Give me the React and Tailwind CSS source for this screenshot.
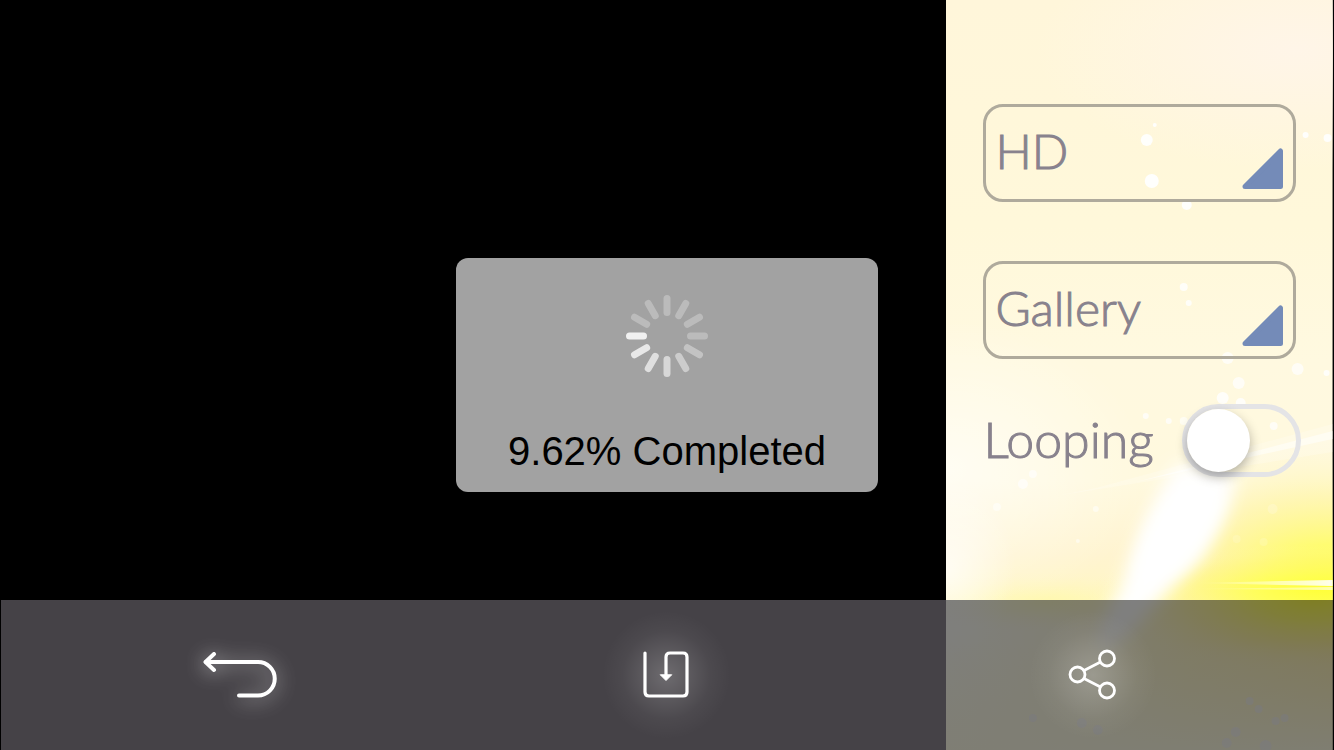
import React, { useState } from "react"

const dots = [
  [201, 140, 6, 0.9], [209, 125, 2, 0.9], [206, 181, 7, 0.95], [241, 205, 5, 0.9],
  [238, 287, 4, 0.8], [243, 303, 3, 0.8], [282, 358, 6, 0.7], [352, 369, 6, 0.7],
  [360, 135, 3, 0.9], [382, 138, 4, 0.9], [381, 373, 3, 0.8], [293, 383, 6, 0.7],
  [277, 398, 6, 0.8], [295, 403, 5, 0.8], [200, 416, 3, 0.7], [223, 421, 3, 0.7],
  [238, 421, 4, 0.6], [328, 426, 4, 0.7], [87, 474, 4, 0.6], [77, 484, 5, 0.6],
  [51, 507, 4, 0.5], [150, 509, 3, 0.5], [327, 509, 5, 0.2], [132, 541, 2, 0.5],
  [291, 539, 4, 0.15], [318, 542, 4, 0.15],
]

const lowDots = [
  [87, 718, 4], [136, 723, 5], [152, 730, 5], [290, 732, 5], [281, 743, 5],
  [304, 701, 4], [313, 709, 4], [330, 721, 4], [339, 718, 4], [320, 746, 6],
]

function Backdrop() {
  return (
    <svg className="block h-full w-full" viewBox="0 0 387 750" preserveAspectRatio="none" aria-hidden="true">
      <defs>
        <linearGradient id="sky" x1="0" y1="0" x2="0" y2="1">
          <stop offset="0" stopColor="#fff6da" />
          <stop offset="0.3" stopColor="#fff8da" />
          <stop offset="0.48" stopColor="#fff9e0" />
          <stop offset="0.64" stopColor="#fff9de" />
          <stop offset="0.74" stopColor="#fff4d0" />
          <stop offset="0.8" stopColor="#fff7c4" />
          <stop offset="1" stopColor="#fdfbe8" />
        </linearGradient>
        <radialGradient id="sun" cx="0.5" cy="0.5" r="0.5">
          <stop offset="0" stopColor="#ffff38" />
          <stop offset="0.3" stopColor="#ffff50" stopOpacity="0.75" />
          <stop offset="0.65" stopColor="#fff47a" stopOpacity="0.35" />
          <stop offset="1" stopColor="#fff3c0" stopOpacity="0" />
        </radialGradient>
        <radialGradient id="haze" cx="0.5" cy="0.5" r="0.5">
          <stop offset="0" stopColor="#fff" />
          <stop offset="1" stopColor="#fff" stopOpacity="0" />
        </radialGradient>
        <radialGradient id="pink" cx="0.5" cy="0.5" r="0.5">
          <stop offset="0" stopColor="#fff5e8" />
          <stop offset="1" stopColor="#fff5e8" stopOpacity="0" />
        </radialGradient>
        <linearGradient id="ground" x1="0" y1="0" x2="1" y2="0">
          <stop offset="0" stopColor="#fffff8" />
          <stop offset="0.35" stopColor="#fffbe2" />
          <stop offset="0.62" stopColor="#fff7c8" />
          <stop offset="1" stopColor="#fff2b4" />
        </linearGradient>
        <linearGradient id="fade" x1="0" y1="0" x2="0" y2="1">
          <stop offset="0" stopColor="#fffbe0" stopOpacity="0" />
          <stop offset="1" stopColor="#fffde8" />
        </linearGradient>
        <linearGradient id="flare" x1="0" y1="0" x2="1" y2="0">
          <stop offset="0" stopColor="#fff" stopOpacity="0" />
          <stop offset="1" stopColor="#fff" />
        </linearGradient>
        <filter id="soft" x="-50%" y="-50%" width="200%" height="200%">
          <feGaussianBlur stdDeviation="9" />
        </filter>
        <clipPath id="above"><rect width="387" height="600" /></clipPath>
        <clipPath id="below"><rect y="600" width="387" height="150" /></clipPath>
      </defs>
      <rect width="387" height="750" fill="url(#sky)" />
      <ellipse cx="350" cy="50" rx="260" ry="120" fill="url(#pink)" />
      <g clipPath="url(#above)">
        <ellipse cx="387" cy="590" rx="230" ry="150" fill="url(#sun)" />
        <ellipse cx="370" cy="590" rx="230" ry="45" fill="url(#sun)" opacity="0.8" />
      </g>
      <g clipPath="url(#below)">
        <rect y="600" width="387" height="150" fill="url(#ground)" />
        <ellipse cx="370" cy="598" rx="200" ry="75" fill="url(#sun)" opacity="0.9" />
        <rect y="640" width="387" height="110" fill="url(#fade)" opacity="0.9" />
      </g>
      <ellipse cx="100" cy="602" rx="140" ry="30" fill="url(#sun)" opacity="0.15" />
      <ellipse cx="0" cy="470" rx="200" ry="150" fill="url(#haze)" opacity="0.65" />
      <ellipse cx="0" cy="570" rx="70" ry="90" fill="url(#haze)" opacity="0.7" />
      <path d="M387 424 L150 488 L110 496 L387 452 Z" fill="#fff" opacity="0.2" />
      <path d="M387 431 L190 482 L387 439 Z" fill="#fff" opacity="0.5" />
      <path d="M230 465 L292 472 L280 515 L258 555 L222 592 L182 635 L150 655 L155 625 L175 585 L195 530 Z" fill="#fff" filter="url(#soft)" />
      <path d="M235 485 L278 490 L265 530 L238 565 L192 590 L194 555 L210 515 Z" fill="#fff" filter="url(#soft)" />
      <path d="M250 583 L387 580 L387 586 Z" fill="url(#flare)" opacity="0.9" />
      <path d="M245 589 L387 587 L387 590 Z" fill="url(#flare)" opacity="0.6" />
      {dots.map(([cx, cy, r, o]) => (
        <circle key={`${cx}-${cy}`} cx={cx} cy={cy} r={r} fill="#fff" opacity={o} />
      ))}
      {lowDots.map(([cx, cy, r]) => (
        <circle key={`${cx}-${cy}`} cx={cx} cy={cy} r={r} fill="#f4f4ff" opacity="0.5" />
      ))}
    </svg>
  )
}

function PickerField({ label, value, onChange, options }) {
  return (
    <div className="grid">
      <select
        aria-label={label}
        value={value}
        onChange={(event) => onChange(event.target.value)}
        className="col-start-1 row-start-1 h-[98px] w-full appearance-none rounded-[20px] border-3 border-[#afaa9c] bg-transparent pb-1 pl-[9px] text-[48px] font-light text-[#88828d] [-webkit-text-stroke:1px_#88828d] focus:outline-none"
      >
        {options.map((option) => <option key={option}>{option}</option>)}
      </select>
      <svg className="pointer-events-none col-start-1 row-start-1 mr-3 mb-3 h-[42px] w-[42px] self-end justify-self-end" viewBox="0 0 42 42" aria-hidden="true">
        <path d="M38.500 3 V38.500 H3 Z" fill="#748bb8" stroke="#748bb8" strokeWidth="5" strokeLinejoin="round" />
      </svg>
    </div>
  )
}

// opacity of each spoke, clockwise from the top
const spokes = [0.27, 0.27, 0.27, 0.27, 0.36, 0.45, 0.57, 0.66, 0.75, 0.85, 0.27, 0.27]

function Spinner() {
  return (
    <svg className="h-[82px] w-[82px]" viewBox="-41 -41 82 82" aria-hidden="true">
      {spokes.map((opacity, i) => (
        <rect key={i} x="-3.5" y="-41" width="7" height="21" rx="3.5" fill="#fff" opacity={opacity} transform={`rotate(${i * 30})`} />
      ))}
    </svg>
  )
}

function ToolButton({ label, glow, children }) {
  return (
    <button aria-label={label} className={`flex h-full flex-1 items-center justify-center ${glow ? "bg-[radial-gradient(circle,rgba(255,255,255,0.22)_0,rgba(255,255,255,0.12)_24px,rgba(255,255,255,0.04)_44px,rgba(255,255,255,0)_64px)]" : ""}`}>
      {children}
    </button>
  )
}

function App() {

  const [quality, setQuality] = useState("HD");
  const [target, setTarget] = useState("Gallery");
  const [looping, setLooping] = useState(false);

  return (
    <div className="grid min-h-screen grid-cols-[1fr_29%] grid-rows-[1fr_150px] bg-black pr-px font-['Lato','Open_Sans',sans-serif]">

      <div className="col-start-1 row-start-2 ml-px bg-[#8a848e]" />

      <div className="relative col-start-2 row-span-2 row-start-1">
        <div className="absolute inset-0">
          <Backdrop />
        </div>
      </div>

      <section className="relative col-start-2 row-start-1 flex flex-col gap-[59px] pt-[104px] pr-[37px] pl-[37px]">
        <PickerField label="Quality" value={quality} onChange={setQuality} options={["HD", "SD"]} />
        <PickerField label="Save to" value={target} onChange={setTarget} options={["Gallery", "Files"]} />
        <div className="-mt-[14px] -mr-[5px] flex items-center justify-between">
          <label htmlFor="looping" className="pb-1 text-[50px] leading-none font-light text-[#88828d] [-webkit-text-stroke:1px_#88828d]">Looping</label>
          <input
            id="looping"
            type="checkbox"
            checked={looping}
            onChange={(event) => setLooping(event.target.checked)}
            className="h-[73px] w-[119px] shrink-0 appearance-none rounded-full border-5 border-[#e4e4e6] before:block before:h-[63px] before:w-[63px] before:rounded-full before:bg-white before:shadow-[0_5px_12px_rgba(0,0,0,0.3)] checked:before:translate-x-[46px]"
          />
        </div>
      </section>

      <footer className="relative col-span-2 col-start-1 row-start-2 flex items-center bg-black/50 px-[2%]">
        <ToolButton label="Back">
          <svg className="h-[50px] w-[76px] overflow-visible drop-shadow-[0_2px_10px_rgba(255,255,255,0.7)]" viewBox="0 0 76 50" fill="none" stroke="#fff" strokeWidth="4" strokeLinecap="round" strokeLinejoin="round">
            <path d="M4 12 H56 A16.5 16.5 0 0 1 56 45.500 H37" />
            <path d="M12 4 L3.500 12 L12 20" />
          </svg>
        </ToolButton>
        <ToolButton label="Save" glow>
          <svg className="h-[48px] w-[48px]" viewBox="0 0 48 48" fill="none" stroke="#fff" strokeWidth="3.200" strokeLinecap="round" strokeLinejoin="round">
            <path d="M2 2 V41 Q2 45 6 45 H40 Q44 45 44 41 V6 Q44 2 40 2 H27 Q23 2 23 6 V26" />
            <path d="M17.500 24 L23 29.500 L28.500 24 Z" fill="#fff" strokeWidth="1" />
          </svg>
        </ToolButton>
        <ToolButton label="Share" glow>
          <svg className="h-[52px] w-[50px]" viewBox="0 0 50 52" fill="none" stroke="#fff" strokeWidth="2.800">
            <circle cx="9.500" cy="25.500" r="7.500" />
            <circle cx="39" cy="9.500" r="7.500" />
            <circle cx="39" cy="41.500" r="7.500" />
            <path d="M16 21.500 L32.500 13 M16 29.500 L32.500 38" />
          </svg>
        </ToolButton>
      </footer>

      <div className="pointer-events-none fixed inset-0 flex items-center justify-center">
        <div role="status" className="flex flex-col items-center gap-[48px] rounded-xl bg-[#a2a2a2] px-[52px] pt-[37px] pb-[15px] font-['Liberation_Sans',sans-serif]">
          <Spinner />
          <p className="text-[40px] leading-[52px] whitespace-nowrap text-black">9.62% Completed</p>
        </div>
      </div>
    </div>
  )
}

export default App;
